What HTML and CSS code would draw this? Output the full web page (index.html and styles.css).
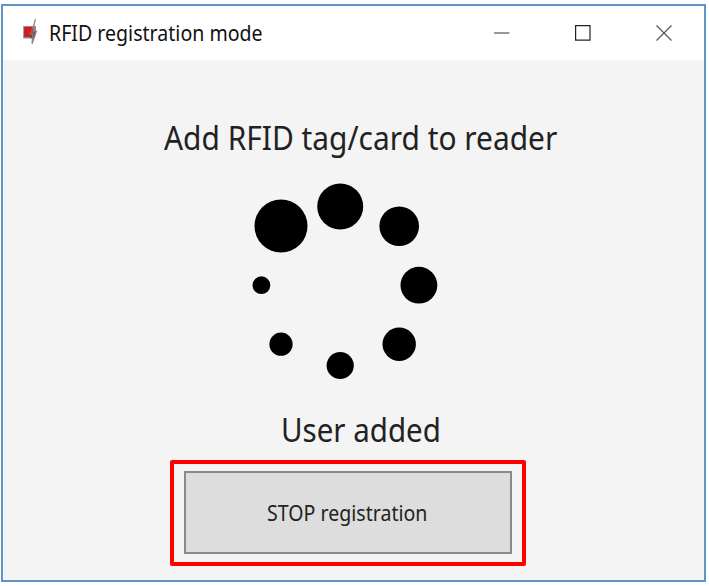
FILE: index.html
```html
<!DOCTYPE html>
<html lang="en">
<head>
<meta charset="utf-8">
<title>RFID registration mode</title>
<link rel="stylesheet" href="styles.css">
</head>
<body>
<div class="window">
  <header class="titlebar">
    <svg class="app-icon" width="18" height="28" viewBox="0 0 18 28">
      <path d="M1.2 8H14V12L12 20.5H1.2Z" fill="#a98282"/>
      <path d="M2.2 9H11L7 19H2.2Z" fill="#8b3034"/>
      <path d="M3.5 9.5H11L7 18H3.5Z" fill="#e8151f"/>
      <path d="M7 19L11 10V16L14 15L12 21Z" fill="#6b4038"/>
      <path d="M13.5 1L10 13H14.5L10 26L10.5 16H8.5L12 7Z" fill="#666" stroke="#888" stroke-width="1.1"/>
      <path d="M9 15L11.5 10.5M11 19L12.5 15" stroke="#b1452e" stroke-width="1.2"/>
    </svg>
    <h1 class="title"><span>RFID registration mode</span></h1>
    <div class="controls">
      <svg width="16" height="16" viewBox="0 0 16 16"><path d="M0 8H15.5" /></svg>
      <svg width="16" height="16" viewBox="0 0 16 16"><path class="dark" d="M.6.6H15V15.2H.6Z"/></svg>
      <svg width="16" height="16" viewBox="0 0 16 16"><path d="M.5.5L15.5 15.5M15.5.5L.5 15.5"/></svg>
    </div>
  </header>
  <main class="content">
    <p class="prompt"><span>Add RFID tag/card to reader</span></p>
    <svg class="spinner" width="186" height="198" viewBox="252 183 186 198">
      <circle cx="281" cy="226" r="26.5"/>
      <circle cx="340.2" cy="206.5" r="23"/>
      <circle cx="399.2" cy="226.2" r="19.8"/>
      <circle cx="418.9" cy="285.2" r="18.4"/>
      <circle cx="399.2" cy="344.2" r="16.7"/>
      <circle cx="340.2" cy="365.5" r="13.6"/>
      <circle cx="281" cy="344.2" r="11.6"/>
      <circle cx="261.4" cy="285.2" r="8.9"/>
    </svg>
    <p class="status"><span>User added</span></p>
    <div class="highlight">
      <button class="stop"><span>STOP registration</span></button>
    </div>
  </main>
</div>
</body>
</html>
```
FILE: styles.css
```css
* { box-sizing: border-box; }
body {
  margin: 0;
  padding: 4px 3px 4px 1px;
  background: #fff;
  font-family: "Noto Sans", sans-serif;
}
.window {
  width: 705px;
  height: 578px;
  border: 2px solid #5f96c6;
  background: #f4f4f4;
}
.titlebar {
  display: flex;
  align-items: center;
  height: 54px;
  padding: 0 32px 0 19px;
  background: #fff;
}
.app-icon { margin-top: -3px; }
.title {
  margin: 0 0 0 9px;
  font-size: 21px;
  font-weight: 400;
  line-height: 30px;
  color: #111;
  white-space: nowrap;
}
.title span, .prompt span, .status span, .stop span {
  display: inline-block;
  transform-origin: 0 50%;
}
.title span, .stop span { transform: scaleX(.932); }
.prompt span { transform: scaleX(.92); }
.status span { transform: scaleX(.908); }
.controls { display: flex; gap: 65px; margin-left: auto; }
.controls path { fill: none; stroke: #555; stroke-width: 1.2; }
.controls .dark { stroke: #222; }
.content { display: flex; flex-direction: column; align-items: flex-start; }
.prompt, .status {
  margin: 0;
  font-size: 32.5px;
  line-height: 44px;
  color: #222;
  white-space: nowrap;
}
.prompt { padding: 56px 0 0 161px; }
.spinner { margin: 23px 0 0 249px; }
.status { margin: 27px 0 0 278px; }
.highlight {
  width: 356px;
  height: 106px;
  margin: 8px 0 0 167px;
  padding: 7px 10px;
  border: 4px solid #f00;
  border-radius: 2px;
}
.stop {
  display: block;
  width: 328px;
  height: 83px;
  padding: 0 0 0 81px;
  border: 2px solid #8a8a8a;
  background: #ddd;
  font: 21px/30px "Noto Sans", sans-serif;
  color: #222;
  text-align: left;
  white-space: nowrap;
}
```
